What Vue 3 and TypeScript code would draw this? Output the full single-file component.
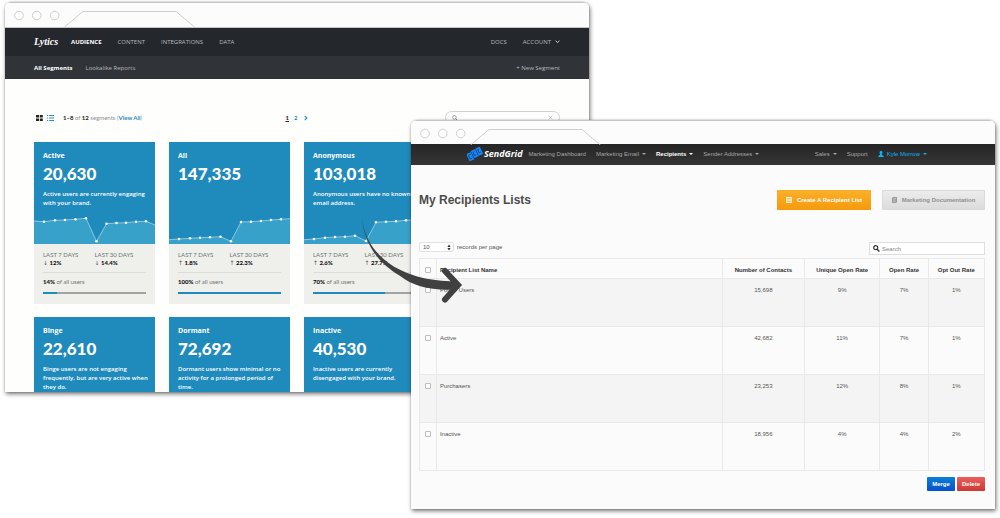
<script setup lang="ts">
import { ref } from 'vue'

interface Segment {
  name: string
  count: string
  description: string
  week: string
  weekDir: string
  month: string
  monthDir: string
  share: number
  points: [number, number][]
}

const segments: Segment[] = [
  {
    name: 'Active',
    count: '20,630',
    description: 'Active users are currently engaging with your brand.',
    week: '12%',
    weekDir: '↓',
    month: '14.4%',
    monthDir: '↓',
    share: 14,
    points: [[0, 7], [10, 7.7], [21, 6.3], [31, 6], [41.5, 5.3], [52, 4.3], [62.5, 27.3], [72.5, 9.7], [82.5, 9], [92, 8.7], [102, 7.7], [112, 7.3], [121, 11]],
  },
  {
    name: 'All',
    count: '147,335',
    description: '',
    week: '1.8%',
    weekDir: '↑',
    month: '22.3%',
    monthDir: '↑',
    share: 100,
    points: [[0, 25.7], [10, 25], [21, 24.3], [31, 23.7], [41, 23.3], [51.5, 22.7], [62, 27.3], [72, 8], [82, 7.7], [92, 7], [102, 6], [112, 5.3], [121, 4.7]],
  },
  {
    name: 'Anonymous',
    count: '103,018',
    description: 'Anonymous users have no known email address.',
    week: '2.6%',
    weekDir: '↑',
    month: '27.7%',
    monthDir: '↑',
    share: 70,
    points: [[0, 25.7], [10, 25], [21, 23.7], [31, 23], [41, 22.7], [51, 21.7], [62, 27], [72, 8.3], [82, 7.7], [92, 7.3], [102, 6.3], [112, 5.7], [121, 5]],
  },
]

const moreSegments = [
  { name: 'Binge', count: '22,610', description: 'Binge users are not engaging frequently, but are very active when they do.' },
  { name: 'Dormant', count: '72,692', description: 'Dormant users show minimal or no activity for a prolonged period of time.' },
  { name: 'Inactive', count: '40,530', description: 'Inactive users are currently disengaged with your brand.' },
]

const lists = ref([
  { name: 'Power Users', contacts: '15,698', unique: '9%', open: '7%', optOut: '1%', picked: false },
  { name: 'Active', contacts: '42,682', unique: '11%', open: '7%', optOut: '1%', picked: false },
  { name: 'Purchasers', contacts: '23,253', unique: '12%', open: '8%', optOut: '1%', picked: false },
  { name: 'Inactive', contacts: '18,956', unique: '4%', open: '4%', optOut: '2%', picked: false },
])

const segmentQuery = ref('')
const listQuery = ref('')
const pageSize = ref('10')

const line = (points: [number, number][]) => points.map((p) => p.join(',')).join(' ')
const area = (points: [number, number][]) => `0,30 ${line(points)} 121,30`
</script>

<template>
  <main class="scene">
    <section class="window lytics">
      <div class="frame">
        <div class="chrome">
          <svg width="200" height="24" viewBox="0 0 200 24" aria-hidden="true">
            <g fill="#fff" stroke="#cfcfcf">
              <circle cx="14" cy="12.5" r="4.3" />
              <circle cx="31.8" cy="12.5" r="4.3" />
              <circle cx="49.7" cy="12.5" r="4.3" />
              <path d="M59.5 24 78 8.5h93L189.500 24" fill="none" />
            </g>
          </svg>
        </div>
        <header class="topnav">
          <a href="#" class="lytics-logo">Lytics</a>
          <nav class="links">
            <a href="#" class="current">AUDIENCE</a>
            <a href="#">CONTENT</a>
            <a href="#">INTEGRATIONS</a>
            <a href="#">DATA</a>
          </nav>
          <nav class="links end">
            <a href="#">DOCS</a>
            <a href="#" class="account">ACCOUNT
              <svg width="5" height="4" viewBox="0 0 5 4" aria-hidden="true"><path d="M.6.6 2.500 2.700 4.400.6" fill="none" stroke="#c9cbcc" /></svg>
            </a>
          </nav>
        </header>
        <nav class="subnav">
          <a href="#" class="current">All Segments</a>
          <a href="#">Lookalike Reports</a>
          <a href="#" class="new">+ New Segment</a>
        </nav>
        <div class="segments">
          <div class="toolbar">
            <div class="summary">
              <button type="button" aria-label="Grid view">
                <svg width="7" height="6" viewBox="0 0 7 6"><path d="M0 0h3v2.500H0zM3.800 0h3v2.500h-3zM0 3.400h3v2.500H0zM3.800 3.400h3v2.500h-3z" fill="#222" /></svg>
              </button>
              <button type="button" aria-label="List view">
                <svg width="7" height="6" viewBox="0 0 7 6"><path d="M0 .5h1.200M2.200.5H7M0 3h1.200M2.200 3H7M0 5.500h1.200M2.200 5.500H7" stroke="#2a90c4" /></svg>
              </button>
              <p><b>1–8</b> of <b>12</b> segments (<a href="#">View All</a>)</p>
            </div>
            <nav class="pager">
              <a href="#" class="here">1</a>
              <a href="#">2</a>
              <a href="#" class="next" aria-label="Next page">
                <svg width="4" height="6" viewBox="0 0 4 6"><path d="M.8.8 2.800 3 .8 5.200" fill="none" stroke="#2a90c4" stroke-width="1.200" /></svg>
              </a>
            </nav>
            <label class="pill">
              <svg width="6" height="6" viewBox="0 0 6 6" aria-hidden="true"><circle cx="2.400" cy="2.400" r="1.800" fill="none" stroke="#888" stroke-width=".8" /><path d="m3.700 3.700 1.900 1.900" stroke="#888" /></svg>
              <input v-model="segmentQuery" type="text" aria-label="Find segments" />
              <svg width="5" height="5" viewBox="0 0 5 5" aria-hidden="true"><path d="m.7.7 3.600 3.600M4.300.7.7 4.300" stroke="#bbb" stroke-width=".8" /></svg>
            </label>
          </div>
          <div class="cards">
            <article v-for="s in segments" :key="s.name" class="card">
              <div class="hero">
                <h2>{{ s.name }}</h2>
                <strong>{{ s.count }}</strong>
                <p>{{ s.description }}</p>
                <svg class="chart" viewBox="0 0 121 30" preserveAspectRatio="none" aria-hidden="true">
                  <polygon :points="area(s.points)" fill="#38a1c9" />
                  <polyline :points="line(s.points)" fill="none" stroke="#b5dcec" stroke-width=".7" />
                  <circle v-for="p in s.points.slice(1, -1)" :key="p[0]" :cx="p[0]" :cy="p[1]" r="1.300" fill="#fff" />
                </svg>
              </div>
              <div class="stats">
                <dl>
                  <div><dt>LAST 7 DAYS</dt><dd><i>{{ s.weekDir }}</i> {{ s.week }}</dd></div>
                  <div><dt>LAST 30 DAYS</dt><dd><i>{{ s.monthDir }}</i> {{ s.month }}</dd></div>
                </dl>
                <p><b>{{ s.share }}%</b> of all users</p>
                <div class="bar"><span :style="{ width: s.share + '%' }"></span></div>
              </div>
            </article>
          </div>
          <div class="cards">
            <article v-for="s in moreSegments" :key="s.name" class="card">
              <div class="hero">
                <h2>{{ s.name }}</h2>
                <strong>{{ s.count }}</strong>
                <p>{{ s.description }}</p>
              </div>
            </article>
          </div>
        </div>
      </div>
    </section>

    <section class="window sendgrid">
      <div class="frame">
        <div class="chrome">
          <svg width="200" height="24" viewBox="0 0 200 24" aria-hidden="true">
            <g fill="#fff" stroke="#cfcfcf">
              <circle cx="14" cy="12.5" r="4.3" />
              <circle cx="31.8" cy="12.5" r="4.3" />
              <circle cx="49.7" cy="12.5" r="4.3" />
              <path d="M59.5 24 78 8.5h93L189.500 24" fill="none" />
            </g>
          </svg>
        </div>
        <header class="sgnav">
          <a href="#" class="sg-logo">
            <svg width="16" height="14" viewBox="0 0 16 14" aria-hidden="true">
              <g transform="rotate(-25 8 7)">
                <path d="M0 3.500h5.300v8H0zM5.300 2.500h5v8h-5zM10.300 2.300h5.200v8h-5.200z" fill="#1a86ee" />
                <path d="M1.500 5.500h2.300M1.500 5.500v4h2.300M5.300 3v8M8.500 4.700H7v3.500h1.800M10.400 2.800v7.200M13.700 4.300h-1.500v3.500h1.700" fill="none" stroke="#0b4796" stroke-width=".8" />
              </g>
            </svg>
            SendGrid
          </a>
          <nav class="links">
            <a href="#">Marketing Dashboard</a>
            <a href="#" class="drop">Marketing Email</a>
            <a href="#" class="drop current">Recipients</a>
            <a href="#" class="drop">Sender Addresses</a>
          </nav>
          <nav class="links end">
            <a href="#" class="drop">Sales</a>
            <a href="#">Support</a>
            <a href="#" class="drop user">
              <svg width="6" height="6" viewBox="0 0 6 6" aria-hidden="true"><path d="M3 0c1 0 1.500.7 1.500 1.600S4 3.200 3.700 3.500c0 .6 2.100.7 2.100 2.500H.2c0-1.800 2.100-1.900 2.100-2.500C2 3.200 1.500 2.500 1.500 1.600S2 0 3 0z" fill="#0db1f5" /></svg>
              Kyle Morrow
            </a>
          </nav>
        </header>
        <div class="lists">
          <div class="heading">
            <h1>My Recipients Lists</h1>
            <button type="button" class="create">
              <svg width="6" height="6" viewBox="0 0 6 6" aria-hidden="true"><path d="M0 0h6v6H0z" fill="#fff3d6" /><path d="M.8 1.500h4.500M.8 3h4.500M.8 4.500h4.500" stroke="#f9a71c" stroke-width=".6" /></svg>
              Create A Recipient List
            </button>
            <button type="button" class="docs">
              <svg width="5" height="6" viewBox="0 0 5 6" aria-hidden="true"><path d="M1 0h4v5L4 6H0V1z" fill="#9a9a9a" /><path d="M1.500 1.500H4M1.300 3h2.500M1.100 4.500h2.400" stroke="#e4e4e4" stroke-width=".5" /></svg>
              Marketing Documentation
            </button>
          </div>
          <div class="filters">
            <label class="size">
              <span class="select">
                <select v-model="pageSize"><option>10</option></select>
                <svg width="4" height="7" viewBox="0 0 4 7" aria-hidden="true"><path d="M2 .4 3.600 2.900H.4zM2 6.600.4 4.100h3.200z" fill="#333" /></svg>
              </span>
              records per page
            </label>
            <label class="search">
              <svg width="7" height="7" viewBox="0 0 7 7" aria-hidden="true"><circle cx="2.700" cy="2.700" r="2" fill="none" stroke="#333" stroke-width="1.200" /><path d="m4.200 4.200 2.200 2.200" stroke="#333" stroke-width="1.400" /></svg>
              <input v-model="listQuery" type="text" placeholder="Search" aria-label="Search lists" />
            </label>
          </div>
          <table>
            <colgroup>
              <col class="c-pick" /><col /><col class="c-contacts" /><col class="c-unique" /><col class="c-open" /><col class="c-out" />
            </colgroup>
            <thead>
              <tr>
                <th><input type="checkbox" aria-label="Select all lists" /></th>
                <th class="name">Recipient List Name</th>
                <th>Number of Contacts</th>
                <th>Unique Open Rate</th>
                <th>Open Rate</th>
                <th>Opt Out Rate</th>
              </tr>
            </thead>
            <tbody>
              <tr v-for="l in lists" :key="l.name">
                <td><input v-model="l.picked" type="checkbox" :aria-label="l.name" /></td>
                <td class="name">{{ l.name }}</td>
                <td>{{ l.contacts }}</td>
                <td>{{ l.unique }}</td>
                <td>{{ l.open }}</td>
                <td>{{ l.optOut }}</td>
              </tr>
            </tbody>
          </table>
          <div class="actions">
            <button type="button" class="merge">Merge</button>
            <button type="button" class="delete">Delete</button>
          </div>
        </div>
      </div>
      <svg class="arrow" width="106" height="92" viewBox="0 0 106 92" aria-hidden="true">
        <path d="M.8 0C3 22 16 42 39.500 53 54 60 68 63.500 94 64.500v8C68 73.500 53 69.500 38.500 58.500 14 44 3 24 .8 0z" fill="#404040" />
        <path d="M84 54 97 68 84 82.500" fill="none" stroke="#404040" stroke-width="6" stroke-linecap="round" />
      </svg>
    </section>
  </main>
</template>

<style>
body {
  background: #fff;
}
</style>

<style scoped>
* {
  box-sizing: border-box;
  margin: 0;
  padding: 0;
}

a {
  color: inherit;
  text-decoration: none;
}

svg {
  display: block;
  flex: none;
}

button {
  border: 0;
  background: none;
  font: inherit;
  color: inherit;
}

input,
select {
  border: 0;
  outline: 0;
  background: none;
  font: inherit;
  color: inherit;
  min-width: 0;
}

.scene {
  display: grid;
  grid-template-columns: 406fr 178fr 406fr;
  padding: 2px 5px 9px;
}

.window {
  grid-row: 1;
  min-width: 0;
  border-radius: 6px 6px 0 0;
  box-shadow: 1px 2px 4px rgba(0, 0, 0, 0.55), 0 0 1px rgba(0, 0, 0, 0.5);
}

.frame {
  overflow: hidden;
  border-radius: inherit;
}

.chrome {
  background: #fcfcfc;
  border-top: 1px solid #c3c6c7;
}

/* Lytics */
.lytics {
  grid-column: 1 / 3;
  align-self: start;
  font: 6px/8px Lato, "Open Sans", sans-serif;
}

.lytics .frame {
  max-height: 390px;
  background: #fefefc;
}

.lytics .chrome {
  border-bottom: 1px solid #c3c6c7;
}

.topnav,
.subnav {
  display: flex;
  align-items: center;
  padding: 0 29px;
  font-family: "Open Sans", sans-serif;
  color: #b6babc;
}

.topnav {
  height: 28px;
  background: #24282c;
}

.lytics-logo {
  font: italic bold 10px/12px "Liberation Serif", serif;
  color: #fff;
  width: 37px;
}

.links {
  display: flex;
  gap: 16px;
}

.end {
  margin-left: auto;
}

.topnav .current,
.subnav .current {
  color: #fff;
  font-weight: 700;
}

.account {
  display: flex;
  align-items: center;
  gap: 4px;
}

.subnav {
  height: 23px;
  gap: 13px;
  background: #303438;
}

.new {
  margin-left: auto;
}

.segments {
  padding: 32px 29px 0;
}

.toolbar {
  display: grid;
  grid-template-columns: 1fr auto 1fr;
  align-items: center;
  margin-bottom: 18px;
}

.summary {
  display: flex;
  align-items: center;
  gap: 4px;
  padding-left: 2px;
  color: #8d9291;
}

.summary p {
  padding-left: 5px;
}

.summary b {
  color: #222;
}

.summary a,
.pager {
  color: #1f8abd;
  font-weight: 700;
}

.pager {
  display: flex;
  align-items: center;
  gap: 5px;
}

.next {
  padding-left: 2px;
}

.pager .here {
  color: #222;
  text-decoration: underline;
}

.pill {
  justify-self: end;
  display: flex;
  align-items: center;
  width: 115px;
  height: 13px;
  padding: 0 6px;
  border: 1px solid #cfd2d2;
  border-radius: 7px;
  background: #fff;
}

.pill input {
  flex: 1;
}

.cards {
  display: grid;
  grid-template-columns: repeat(4, 1fr);
  gap: 14px;
  margin-bottom: 14px;
}

.hero {
  position: relative;
  height: 102px;
  padding: 9px 3px 0 9px;
  background: #1f8abc;
  color: #fff;
}

.hero h2 {
  font: 700 7px/10px "Open Sans", sans-serif;
}

.hero strong {
  display: block;
  margin-top: 4px;
  font-size: 17px;
  line-height: 18px;
  font-weight: 900;
}

.hero p {
  margin-top: 7px;
  font: 600 6px/9px "Open Sans", sans-serif;
}

.chart {
  position: absolute;
  left: 0;
  bottom: 0;
  width: 100%;
  height: 30px;
}

.stats {
  height: 60px;
  padding: 7px 9px 0;
  background: #efefec;
  color: #6e7472;
}

.cards + .cards {
  margin-top: -1px;
}

.stats dl {
  display: grid;
  grid-template-columns: 1fr 1fr;
  padding-bottom: 5px;
  margin-bottom: 5px;
  border-bottom: 1px solid #dcdcd9;
}

.stats dd,
.stats b {
  color: #111;
  font-weight: 900;
}

.stats dd i {
  font: 6px/8px "DejaVu Sans", sans-serif;
  color: #555;
}

.bar {
  margin-top: 6px;
  height: 2px;
  background: #9fa3a3;
}

.bar span {
  display: block;
  height: 2px;
  background: #1f8abc;
}

/* SendGrid */
.sendgrid {
  grid-column: 2 / 4;
  position: relative;
  margin-top: 118px;
  font: 6px/8px "Liberation Sans", Arial, sans-serif;
  color: #555;
}

.sendgrid .frame {
  background: #fbfbfb;
}

.sendgrid .chrome {
  height: 24px;
}

.sgnav {
  display: flex;
  align-items: center;
  height: 21px;
  padding: 0 68px 2px 56px;
  background: linear-gradient(#252525, #363636);
  color: #a5a5a5;
}

.sg-logo {
  display: flex;
  align-items: center;
  gap: 1px;
  margin-right: 6px;
  font: italic bold 9px/10px "Open Sans", sans-serif;
  color: #fff;
}

.sgnav .links {
  gap: 10px;
}

.sgnav a {
  white-space: nowrap;
}

.sgnav .current {
  color: #fff;
  font-weight: 700;
}

.drop {
  display: flex;
  align-items: center;
  gap: 3px;
}

.drop::after {
  content: "";
  border: 2px solid transparent;
  border-top-color: currentColor;
  border-bottom: 0;
}

.user {
  color: #0db1f5;
}

.lists {
  padding: 25px 10px 18px 8px;
}

.heading {
  display: flex;
  align-items: center;
  gap: 11px;
}

h1 {
  flex: 1;
  font-size: 12px;
  line-height: 18px;
  color: #4c4c4c;
}

.create,
.docs {
  display: flex;
  align-items: center;
  justify-content: center;
  gap: 5px;
  height: 20px;
  font-weight: 700;
}

.create {
  width: 94px;
  background: linear-gradient(#fbb02a, #f59a0c);
  color: #fff;
}

.docs {
  width: 103px;
  background: linear-gradient(#ececec, #dcdcdc);
  border: 1px solid #dadada;
  color: #8f8f8f;
}

.filters {
  display: flex;
  align-items: flex-start;
  justify-content: space-between;
  margin: 32px 0 3px;
}

.size {
  display: flex;
  align-items: center;
  gap: 3px;
}

.select {
  display: flex;
  align-items: center;
  width: 35px;
  height: 10px;
  padding: 0 2px 0 3px;
  border: 1px solid #e2e2e2;
  border-radius: 2px;
  background: #fff;
}

.select select {
  flex: 1;
  appearance: none;
}

.search {
  display: flex;
  align-items: center;
  gap: 2px;
  width: 116px;
  height: 13px;
  padding: 0 3px;
  border: 1px solid #dedede;
  background: #fff;
}

.search input {
  flex: 1;
}

.search input::placeholder {
  color: #888;
}

table {
  width: 100%;
  table-layout: fixed;
  border-collapse: collapse;
  border: 1px solid #e9e9e9;
}

.c-pick {
  width: 3%;
}

.c-contacts {
  width: 14.500%;
}

.c-unique {
  width: 13.400%;
}

.c-open {
  width: 8.500%;
}

.c-out {
  width: 10%;
}

th,
td {
  border: 1px solid #e9e9e9;
  text-align: center;
  vertical-align: top;
}

th {
  height: 20px;
  padding-top: 7px;
  color: #333;
}

td {
  height: 48px;
  padding-top: 7px;
}

.name {
  text-align: left;
  padding-left: 3px;
}

tbody tr:nth-child(odd) {
  background: #f4f4f4;
}

input[type="checkbox"] {
  appearance: none;
  display: block;
  width: 6px;
  height: 6px;
  margin: 1px auto 0;
  border: 1px solid #bdbdbd;
  border-radius: 1px;
  background: #fff;
}

.actions {
  display: flex;
  justify-content: flex-end;
  gap: 2px;
  margin-top: 6px;
}

.actions button {
  width: 28px;
  height: 14px;
  border-radius: 1px;
  color: #fff;
  font-weight: 700;
}

.merge {
  background: linear-gradient(#0a80d6, #0550cc);
}

.delete {
  background: linear-gradient(#e8605c, #cc3a35);
}

.arrow {
  position: absolute;
  left: -50px;
  top: 97px;
}
</style>
